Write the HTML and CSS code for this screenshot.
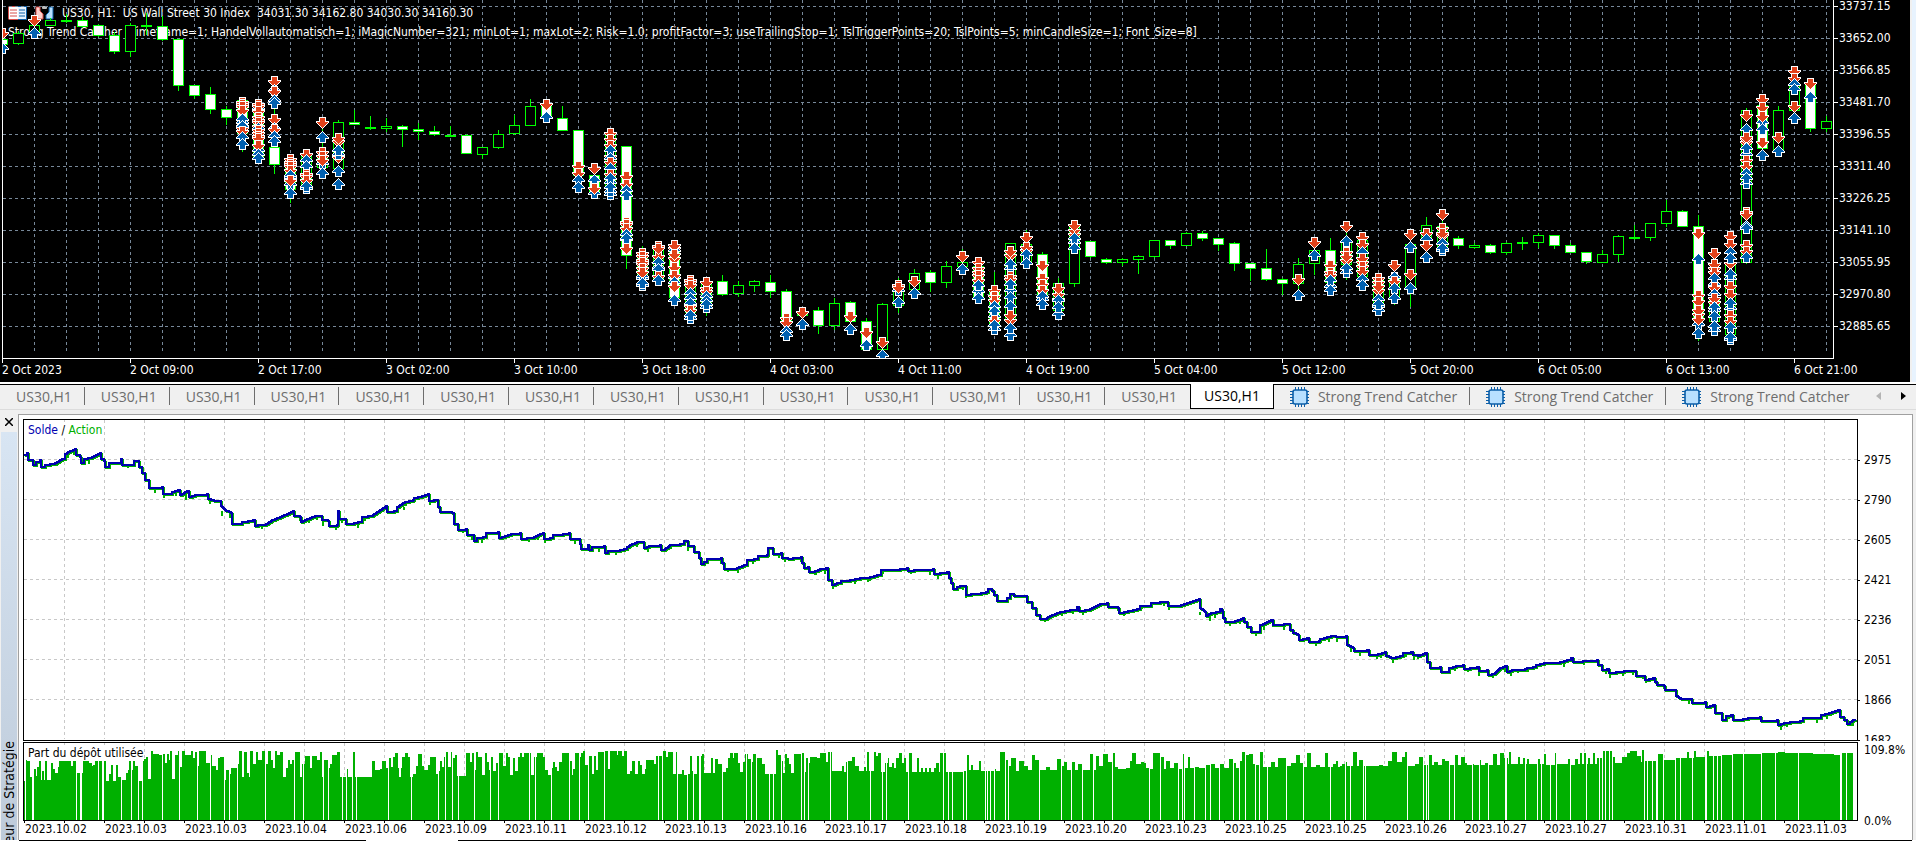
FILE: index.html
```
<!DOCTYPE html>
<html lang="fr">

<head>
    <meta charset="UTF-8">
    <meta name="viewport" content="width=device-width, initial-scale=1.0">
    <title>US30,H1</title>
    <link rel="stylesheet" href="styles.css">
</head>

<body>
    <!-- shared icon -->
    <svg class="defs" width="0" height="0">
        <symbol id="chip" viewBox="0 0 20 20">
            <path d="M6.5 0v20M9.5 0v20M12.5 0v20M15.5 0v20M0 4.5h20M0 7.5h20M0 10.5h20M0 13.5h20M0 16.5h20" stroke="#0b5ea8" stroke-width="1" transform="translate(-1 0)"/>
            <rect x="3" y="3" width="14" height="14" rx="2" fill="#b8e0ff" stroke="#0b5ea8" stroke-width="1.6"/>
        </symbol>
    </svg>

    <main class="chart-window">
        <div class="chart">
            <div class="plot-area">
                <div class="chart-header">
                    <div class="chart-title">
                        <svg width="19" height="14" viewBox="0 0 19 14">
                            <rect x="0.5" y="0.5" width="18" height="13" rx="1" fill="#fff" stroke="#d8504c"/>
                            <path d="M10 .5h8.5v13H10" fill="#e8f4ff" stroke="#0b5ea8"/>
                            <path d="M2 4h7M2 7h7M2 10h7" stroke="#d8504c"/>
                            <path d="M11 4h6M11 7h6M11 10h6" stroke="#0b5ea8"/>
                        </svg>
                        <svg width="19" height="14" viewBox="0 0 19 14">
                            <path d="M1 1h4v4l3 3v5H1z" fill="#ffd0cc" stroke="#d8504c"/>
                            <path d="M18 1h-4v5l-3 3v4h7z" fill="#b8e0ff" stroke="#0b5ea8"/>
                            <rect x="7" y="0" width="5" height="3" rx="1" fill="#bbb"/>
                        </svg>
                        <span>US30, H1:&nbsp; US Wall Street 30 Index&nbsp; 34031.30 34162.80 34030.30 34160.30</span>
                    </div>
                    <div class="chart-params">Strong Trend Catcher [Timeframe=1; HandelVollautomatisch=1; iMagicNumber=321; minLot=1; maxLot=2; Risk=1.0; profitFactor=3; useTrailingStop=1; TslTriggerPoints=20; TslPoints=5; minCandleSize=1; Font_Size=8]</div>
                </div>
                <svg id="candles" class="candles"></svg>
            </div>
            <div id="priceAxis" class="price-axis"></div>
            <div id="timeAxis" class="time-axis"></div>
        </div>
    </main>

    <nav class="tabs">
        <div id="tabList" class="tab-list"></div>
        <button class="tab-arrow disabled" aria-label="Précédent"><svg width="5" height="8"><path d="M5 0v8L0 4z"/></svg></button>
        <button class="tab-arrow" aria-label="Suivant"><svg width="5" height="8"><path d="M0 0v8l5-4z"/></svg></button>
    </nav>

    <section class="tester">
        <aside class="tester-side">
            <button class="close-btn" aria-label="Fermer"><svg width="8" height="8"><path d="M0 0l8 8M8 0L0 8" stroke="#000" stroke-width="1.5"/></svg></button>
            <div class="side-title"><span>Testeur de Stratégie</span></div>
        </aside>
        <div class="tester-main">
            <div class="balance-plot">
                <svg id="balance"></svg>
                <div class="plot-label"><span class="balance">Solde</span> / <span class="equity">Action</span></div>
            </div>
            <div id="balanceAxis" class="balance-axis"></div>
            <div class="deposit-plot">
                <svg id="deposit"></svg>
                <div class="plot-label">Part du dépôt utilisée</div>
            </div>
            <div class="deposit-axis"><span>109.8%</span><span>0.0%</span></div>
            <div id="dateAxis" class="date-axis"></div>
        </div>
    </section>
    <footer class="bottom-tabs"><span></span><span></span></footer>

    <script src="script.js"></script>
</body>

</html>
```
FILE: styles.css
```
* {
    box-sizing: border-box;
}

body {
    margin: 0;
    height: 100vh;
    display: flex;
    flex-direction: column;
    overflow: hidden;
    background: #f0f0f0;
    font-family: "DejaVu Sans Condensed", "DejaVu Sans", sans-serif;
    font-size: 12px;
    line-height: 16px;
    color: #000;
}

button {
    border: none;
    background: none;
    padding: 0;
    font: inherit;
    color: inherit;
}

svg {
    display: block;
}

.defs {
    position: absolute;
}

/* price chart */
.chart-window {
    padding-right: 6px;
    background: linear-gradient(to left, #e8f3fe 4px, #f0f0f0 4px);
}

.chart {
    display: grid;
    grid-template-columns: 1fr 76px;
    grid-template-rows: 359px 23px;
    background: #000;
    color: #fff;
}

.plot-area {
    position: relative;
    min-width: 0;
    margin-left: 2px;
    border: solid #fff;
    border-width: 0 1px 1px;
    overflow: hidden;
}

.chart-header {
    position: absolute;
    top: 5px;
    left: 5px;
    white-space: nowrap;
}

.chart-title {
    display: flex;
    align-items: center;
    gap: 8px;
}

.chart-params {
    margin-top: 3px;
}

.candles {
    position: relative;
    width: 100%;
    height: 100%;
    shape-rendering: crispEdges;
}

.price-axis {
    overflow: hidden;
}

.price-axis span {
    display: flex;
    align-items: center;
    gap: 1px;
    height: 32px;
}

.price-axis span:first-child {
    margin-top: -10px;
}

.price-axis span::before {
    content: "";
    width: 4px;
    height: 1px;
    background: #fff;
}

.time-axis {
    grid-column: 1 / 3;
    display: flex;
    margin-left: 2px;
    overflow: hidden;
}

.time-axis span {
    position: relative;
    flex: none;
    width: 128px;
    padding-top: 3px;
    white-space: nowrap;
}

.time-axis span:last-child {
    width: auto;
}

.time-axis span::before {
    content: "";
    position: absolute;
    top: 0;
    left: 0;
    width: 1px;
    height: 4px;
    background: #fff;
}

/* chart tabs */
.tabs {
    display: flex;
    align-items: center;
    flex: none;
    height: 28px;
    border-top: 1px solid #fff;
    border-bottom: 1px solid #dcdcdc;
    font-family: "Open Sans", "Noto Sans", sans-serif;
    font-size: 14px;
    color: #6d6d6d;
    box-shadow: inset 0 1px #fff, inset 0 2px #000;
}

.tab-list {
    display: flex;
    flex: 1;
    min-width: 0;
    height: 100%;
    padding-top: 1px;
    overflow: hidden;
}

.tab {
    position: relative;
    flex: none;
    display: flex;
    align-items: center;
    gap: 8px;
    height: 25px;
    padding: 0 13px 0 16px;
    white-space: nowrap;
}

.tab::after {
    content: "";
    position: absolute;
    right: 0;
    top: 3px;
    width: 1px;
    height: 18px;
    background: #6d6d6d;
}

.tab.no-sep::after,
.tab.active::after {
    display: none;
}

.tab.active {
    background: #fff;
    border: 1px solid #000;
    border-top: none;
    color: #000;
    padding: 0 13px;
}

.tab-arrow {
    width: 25px;
    display: flex;
    justify-content: center;
}

.tab-arrow.disabled {
    fill: #b4b4b4;
}

/* strategy tester */
.tester {
    display: flex;
    flex: 1;
    min-height: 0;
    margin: 4px 3px 0 0;
}

.tester-side {
    width: 18px;
    flex: none;
    display: flex;
    flex-direction: column;
    padding: 3px 1px 0;
}

.close-btn {
    height: 9px;
    margin-left: 4px;
}

.side-title {
    flex: 1;
    min-height: 0;
    display: flex;
    margin-top: 6px;
    overflow: hidden;
    background: linear-gradient(#d8e5f3, #becbda);
    font-size: 14px;
}

.side-title span {
    writing-mode: vertical-rl;
    transform: rotate(180deg);
    margin-top: auto;
    margin-bottom: -28px;
    white-space: nowrap;
}

.tester-main {
    flex: 1;
    min-width: 0;
    display: grid;
    grid-template-columns: 1fr 54px;
    grid-template-rows: 322px 1px 79px 1fr;
    padding: 4px 0 0 4px;
    border: solid #a0a0a0;
    border-width: 1px 1px 0 1px;
    background: #fff;
}

.balance-plot,
.deposit-plot {
    position: relative;
    min-width: 0;
    border: 1px solid #000;
}

.balance-plot {
    overflow: hidden;
}

.balance-plot svg,
.deposit-plot svg {
    width: 100%;
    height: 100%;
    shape-rendering: crispEdges;
}

.plot-label {
    position: absolute;
    top: 2px;
    left: 3px;
    padding: 0 1px;
    background: #fff;
}

.balance {
    color: #0000b0;
}

.equity {
    color: #00b000;
}

.balance-axis {
    overflow: hidden;
    padding-top: 21px;
}

.balance-axis span,
.deposit-axis span {
    display: flex;
    align-items: center;
    gap: 4px;
    height: 40px;
}

.balance-axis span::before {
    content: "";
    width: 2px;
    height: 1px;
    background: #000;
}

.deposit-plot,
.deposit-axis {
    grid-row: 3;
}

.deposit-axis {
    display: flex;
    flex-direction: column;
    justify-content: space-between;
    padding-left: 6px;
}

.deposit-axis span {
    height: 16px;
}

.deposit-axis span:last-child {
    margin-bottom: -8px;
}

.date-axis {
    grid-column: 1 / 3;
    grid-row: 4;
    display: flex;
    overflow: hidden;
    padding-left: 1px;
}

.date-axis span {
    position: relative;
    flex: none;
    width: 80px;
    white-space: nowrap;
    padding-left: 1px;
}

.date-axis span::before,
.date-axis span::after {
    content: "";
    position: absolute;
    top: 0;
    left: 0;
    width: 1px;
    height: 2px;
    background: #000;
}

.date-axis span::after {
    left: 40px;
}

.bottom-tabs {
    display: flex;
    gap: 92px;
    height: 1px;
    flex: none;
    padding: 0 4px 0 19px;
    background: #fff;
}

.bottom-tabs span {
    width: 347px;
    background: #000;
}

.bottom-tabs span:last-child {
    flex: 1;
}
```
FILE: script.js
```
// one bar per line: type (u/d) high open/close low | trade arrows in draw order
const bars = `
d 28 39 44 44|r33 b48
u 31 33 43 45|
u 16 25 33 33|r20 b33
u 18 20 25 26|
u 14 20 20 23|
d 17 20 26 28|
d 24 25 35 37|
d 32 35 51 54|
u 23 25 51 57|
u 13 25 25 35|
d 16 26 39 41|
d 39 39 85 91|
d 85 85 95 99|
d 87 94 109 114|
d 106 109 117 125|
d 98 100 133 152|r102 b106 r104 r106 r110 b125 b122 b119 r128 b126 r131 b137 b144
d 100 104 158 160|r104 b108 r106 r111 r117 r120 r122 r126 b128 r130 r133 r136 r138 b150 r145 b154 b158
d 80 147 164 174|r81 b90 r91 b100 b103 r119 b128 r129 b136 b141
d 158 165 189 203|r159 r162 r164 r166 r170 b180 b177 b175 b184 r180 b193
u 150 156 188 190|r154 b160 b166 r174 r176 r180 b188 b186
u 120 155 167 178|r122 b137 r152 r156 b163 r160 b173
u 120 122 168 169|r141 r138 r157 b154 b150 b171 b184
d 110 122 124 124|
u 116 127 127 130|
u 118 126 128 132|
d 125 126 129 147|
d 123 129 131 140|
d 126 131 134 136|
u 126 135 135 136|
d 134 135 153 153|
u 147 147 154 159|
u 130 134 147 149|
u 115 125 133 135|
u 99 106 125 125|
d 104 106 116 120|r104 b117
d 106 118 130 130|
d 130 130 175 178|r166 r173 b180 b187
d 168 175 191 196|r168 b180 b193 r188
u 130 132 188 196|r133 r139 r145 r156 b150 b158 r162 b168 r174 b182 b178 b194 b191 b187
d 146 146 255 269|r176 r184 b190 b195 r222 r224 r228 b239 b234 b238 r248
d 246 252 278 290|r253 r256 r260 r264 r262 r268 b278 b276 r272 b285 b283
u 244 250 278 280|r246 r256 r248 b267 b262 b269 r276 b280
d 242 250 297 300|r248 b250 r245 r258 r254 r267 b277 r275 b282 r286 b300
u 276 284 312 320|r280 r282 r285 b293 b298 r306 b303 r310 b318 b315
u 278 284 308 316|r288 r282 r291 b296 b300 b307 b304
d 275 281 294 296|
u 281 285 293 297|
u 280 281 285 292|
d 275 282 291 298|
d 289 291 320 332|r318 r322 b331 b335
u 308 311 315 322|r312 b324
d 307 310 325 334|
u 298 303 325 330|
d 301 302 321 330|r316 b329
d 318 321 349 349|r332 b345
u 303 304 349 352|r342 b355
u 278 285 305 313|r285 b290 r287 b302
u 269 273 289 290|r281 b293
d 270 272 282 292|
u 261 266 282 288|
u 249 262 266 272|r256 b269
d 260 266 296 302|r262 r268 r272 r275 r280 b291 b285 b298
d 272 290 326 330|r290 r296 r300 b306 b316 b311 r320 b329 b325
u 243 243 320 330|r255 r251 b268 b264 r276 r279 b290 b284 b297 b306 r320 r315 b335 b328
u 230 244 262 264|r237 r250 r247 b254 b263
d 252 254 299 300|r265 r278 r284 r290 b299 b296 b304
u 278 283 310 316|r299 r294 r288 b300 b314 b307
u 220 226 283 287|r234 r230 r225 b242 b238 b248
d 241 241 256 258|
d 258 259 262 264|
u 258 259 262 266|
u 255 256 259 274|
u 240 240 256 258|
d 240 240 245 249|
u 232 233 245 246|
d 231 233 238 241|
d 238 238 244 251|
d 242 243 263 271|
d 263 263 268 281|
d 249 268 279 281|
d 278 279 283 295|
u 258 264 283 290|r279 b295
u 240 250 263 275|r242 b255
d 238 250 282 290|r265 r272 r275 b286 b280 b290
u 222 240 264 280|r226 b241 r252 r260 r256 b272 b268
u 236 240 276 284|r237 r244 b252 r262 r258 r266 r271 b279 b285
u 276 280 306 310|r278 r290 r282 r286 b306 b299 b310 b304
u 265 278 299 305|r265 r277 b277 r281 b288 b298
u 230 244 288 307|r234 b247 r274 b288
u 217 225 240 250|r233 b239 r245 b257
u 212 226 246 250|r214 r228 r235 r233 b250 b243 b248
d 236 238 245 249|
u 243 245 247 249|
d 244 245 252 254|
u 242 243 252 255|
u 237 242 242 250|
u 233 235 242 248|
d 235 235 245 249|
d 243 245 252 253|
d 252 252 261 264|
u 250 254 262 263|
u 235 236 254 262|
u 225 237 237 240|
u 223 223 237 241|
u 200 211 223 227|
d 210 211 226 227|
d 215 226 320 341|r233 b259 r295 r301 r314 r310 b324 r319 b333
u 248 300 321 325|r253 r268 r264 r272 b284 b278 r287 b294 r302 r298 b310 b307 b316 b330 b326
u 234 262 334 336|r236 r244 b252 r263 b258 b278 b274 r286 r294 b308 b303 r315 r321 b327 b339 b337
u 108 110 262 264|r115 b129 r142 r139 r137 b154 b148 r160 r166 b173 b183 b178 r212 r214 b226 b228 r245 r251 b257
d 96 105 148 152|r99 r107 b122 r116 b129 r142 b155
u 106 110 149 150|r137 b151
u 70 85 110 114|r71 r78 b84 b89 r106 b118
d 82 82 128 132|r83 b97
u 116 121 128 132|`.trim().split('\n');

const arrowDown = 'M-3 -5h6v4h3v1l-6 6l-6 -6v-1h3z';
const arrowUp = 'M-3 5h6v-4h3v-1l-6 -6l-6 6v1h3z';

// dashed grid, x0/y0 are the positions of the first lines
function grid(x0, stepX, y0, stepY, w, h, color) {
    let s = '';
    for (let x = x0; x < w; x += stepX) {
        s += `<path d="M${x}.5 0V${h}"/>`;
    }
    for (let y = y0; y < h; y += stepY) {
        s += `<path d="M0 ${y}.5H${w}"/>`;
    }
    return `<g stroke="${color}" stroke-dasharray="3 3" fill="none">${s}</g>`;
}

function drawCandles() {
    let s = grid(31, 32, 6, 32, 4000, 354, '#778899');
    let arrows = '';
    bars.forEach((line, i) => {
        const [bar, trades] = line.split('|');
        const [type, high, top, bottom, low] = bar.split(' ');
        const x = i * 16 - 1;
        const h = bottom - top;
        s += `<path d="M${x + 0.5} ${high}V${top}M${x + 0.5} ${bottom}V${low}" stroke="#0f0"/>`;
        if (h < 2) {
            s += `<rect x="${x - 5}" y="${top}" width="11" height="2" fill="#0f0"/>`;
        } else {
            s += `<rect x="${x - 4.5}" y="${+top + 0.5}" width="10" height="${h}" stroke="#0f0" fill="${type === 'd' ? '#fff' : '#000'}"/>`;
        }
        trades.split(' ').filter(Boolean).forEach(t => {
            const sell = t[0] === 'r';
            arrows += `<path transform="translate(${x + 0.5} ${t.slice(1)}.5)" d="${sell ? arrowDown : arrowUp}" fill="${sell ? '#e2421b' : '#0060b0'}"/>`;
        });
    });
    s += `<g stroke="#fff">${arrows}</g>`;
    document.getElementById('candles').innerHTML = s;
}

const balance = `24,455 27,453 28,460 32,460 33,465 36,462 40,460 41,467 45,465 55,463 62,459 65,454 70,451 75,449 76,455 80,457 81,463 84,459 92,457 100,453 101,459 104,461 105,467 109,463 118,463 121,459 122,465 130,465 134,461 138,461 139,467 142,473 145,480 149,488 162,487 163,494 168,494 172,492 178,490 180,495 187,491 189,497 195,495 207,494 208,499 214,501 220,501 221,506 226,511 231,513 232,524 238,524 242,522 253,520 255,526 258,525 266,524 272,520 280,517 293,511 294,516 300,517 301,522 307,519 315,516 322,515 322,520 328,521 329,526 337,525 338,511 339,519 345,519 346,524 350,524 358,522 362,517 373,515 380,510 386,506 387,512 394,511 397,507 405,502 413,500 414,498 422,496 428,494 429,501 434,500 438,507 440,512 452,513 454,524 458,530
466,529 467,535 473,535 474,541 477,538 483,537 486,533 498,532 499,538 505,536 511,534 520,533 521,539 527,538 534,537 540,534 543,533 544,539 550,538 553,535 563,534 569,533 570,539 578,539 580,544 581,549 585,549 588,545 589,550 592,547 598,547 604,546 605,553 608,551 620,550 624,549 627,547 632,544 637,542 643,542 644,548 649,546 660,545 661,550 665,549 670,545 680,544 684,541 687,541 688,546 693,546 694,552 698,552 699,558 701,564 704,562 707,559 721,558 722,563 724,569 734,569 739,567 744,565 747,560 754,559 758,556 767,555 768,548 772,548 773,554 781,553 782,558 788,559 793,558 801,557 802,563 804,568 808,567 809,572 815,571 820,569 826,568 828,580 832,585 837,583 841,581 850,580 860,578 870,577 877,575 881,570 893,570 900,569 907,568 908,571 914,570 933,569 934,574 940,573 947,572 949,578 951,583 953,589 957,587 960,586 965,586 966,595 971,594 975,594
986,592 988,589 992,591 994,595 997,601 1003,601 1007,598 1010,594 1014,596 1026,596 1027,602 1032,602 1032,608 1036,615 1040,619 1045,619 1050,616 1057,613 1060,612 1070,610 1076,610 1077,607 1079,611 1090,609 1100,604 1107,603 1108,607 1118,608 1119,613 1128,611 1137,609 1140,606 1150,606 1151,603 1160,602 1167,602 1168,606 1178,606 1187,603 1193,601 1199,599 1200,608 1205,612 1206,616 1211,613 1216,612 1220,609 1222,611 1223,618 1225,622 1232,622 1238,620 1243,618 1244,622 1247,627 1251,632 1258,632 1260,625 1265,623 1273,619 1273,625 1284,624 1289,624 1290,630 1293,633 1298,635 1299,640 1307,638 1309,642 1319,641 1320,639 1331,636 1336,637 1346,636 1347,645 1353,648 1354,651 1367,650 1369,655 1378,654 1385,652 1386,656 1391,658 1400,656 1403,653 1411,652 1413,655 1418,656 1425,653 1427,662 1430,668 1440,667 1441,672 1446,672 1449,668 1456,666 1463,665 1464,669 1470,668 1477,667 1479,671 1487,670 1488,675 1495,673 1500,668
1505,666 1507,672 1512,670 1522,670 1527,668 1533,667 1536,665 1544,663 1560,662 1567,660 1571,658 1573,662 1583,661 1597,660 1598,665 1602,670 1607,669 1609,673 1616,672 1624,671 1635,671 1636,676 1644,676 1645,680 1653,678 1655,682 1657,685 1664,686 1665,690 1674,690 1676,696 1681,699 1690,699 1692,703 1705,702 1706,707 1713,705 1715,713 1720,713 1722,720 1726,716 1731,715 1733,720 1743,719 1748,718 1760,717 1761,721 1777,720 1778,725 1784,723 1790,722 1800,721 1803,718 1817,718 1821,715 1829,713 1838,710 1840,717 1844,720 1847,724 1850,722 1855,719`
    .split(/\s+/).map(p => p.split(',').map(Number));

// small repeatable noise source
let seed = 7;
function rnd() {
    seed = (seed * 16807) % 2147483647;
    return seed / 2147483647;
}

function drawBalance() {
    let d = '';
    let dips = '';
    balance.forEach(([px, py], i) => {
        const x = px - 24;
        const y = py - 420;
        if (!i) {
            d += `M${x} ${y}`;
            return;
        }
        const [qx, qy] = balance[i - 1];
        const dx = px - qx;
        const dy = py - qy;
        if (Math.abs(dy) < 7 && dx > 4) {
            // slow move: split into short steps
            const n = Math.max(1, Math.min(Math.abs(dy), dx));
            for (let k = 1; k <= n; k++) {
                d += `H${qx - 24 + Math.round(dx * k / n)}V${qy - 420 + Math.round(dy * k / n)}`;
            }
            if (rnd() > 0.4) {
                dips += `M${qx - 24 + Math.round(dx * rnd())} ${Math.max(qy, py) - 420}v${3 + Math.round(rnd() * 2)}`;
            }
        } else {
            d += `H${x}V${y}`;
        }
    });
    document.getElementById('balance').innerHTML = grid(40, 40, 39, 40, 4000, 319, '#c8c8c8') +
        `<g fill="none" stroke-width="2"><path d="${d}" stroke="#00b000" transform="translate(1 1)"/>` +
        `<path d="${dips}" stroke="#00b000"/><path d="${d}" stroke="#0000b0"/></g>`;
}

// x:top of each deposit load level
const load = `24:781 26:760 30:777 34:769 36:776 37:767 39:761 41:780 42:771 44:780 45:759 47:780 51:763 53:769 55:773 58:767 59:759 71:766 73:759 77:773 83:759 89:763 92:766 93:765 95:759 106:781 109:774 111:765 113:781 116:765 118:777 121:780 126:773 128:770 129:761 131:770 133:759 135:766 138:781 143:759 146:757 148:779 151:751 153:754 159:755 162:754 165:763 167:754 169:760 170:751 172:779 175:755 178:751 180:767 182:751 185:755 191:751 193:758 195:752 197:766 199:751 206:763 210:755 212:766 216:770 218:758 220:757 224:780 226:770 229:774 231:768 237:764 239:751 242:777 244:752 247:773 249:777 250:751 253:764 256:752 258:760 262:751 265:764 268:751 271:760 273:768 275:751 277:755 280:752 283:777 286:768 288:760 290:764 292:760 295:752 300:777 302:764 305:756 310:768 312:756 317:760 320:752 322:777 324:760 328:768 330:764 332:755 337:752 340:777 346:769 348:777 353:752 355:777 372:761 375:770 380:769 382:761 386:768 388:758 391:767 393:757 395:753 398:768 399:777 401:768 402:757 405:753 408:757 410:777 413:774 416:766 418:754 422:766 424:770 428:765 430:757 436:774 438:771 440:761 442:767 444:757 446:752 448:767 451:752 453:758 455:755 457:776 466:753 470:762 472:753 475:770 476:752 478:757 482:775 485:753 487:762 489:770 491:757 493:771 496:763 499:753 503:766 506:753 508:757 510:775 513:758 515:771 518:757 520:753 522:757 524:753 531:775 534:757 537:753 543:757 545:770 548:775 551:768 553:762 555:767 557:771 559:762 562:753 569:761 572:775 573:769 575:753 579:757 581:753 583:751 585:765 588:769 589:756 592:774 594:756 596:770 598:752 605:751 608:769 610:751 617:755 618:751 622:756 624:751 627:774 630:771 632:761 635:774 638:761 640:765 642:774 645:769 646:760 654:764 656:756 662:751 666:757 668:752 673:774 676:752 678:774 682:770 684:775 688:774 690:756 692:771 694:774 697:756 702:754 704:773 711:758 713:773 715:759 718:764 722:772 726:768 728:758 730:753 733:758 734:753 738:763 740:772 743:762 745:754 748:759 751:762 753:754 757:758 762:764 765:774 776:750 778:755 781:761 783:773 785:754 787:758 789:764 791:773 794:754 802:753 804:772 806:758 808:763 810:757 817:758 820:753 826:762 828:752 832:771 842:766 844:772 846:762 848:761 852:757 855:766 859:771 864:767 866:771 867:752 869:771 874:752 876:756 878:753 881:772 885:763 888:758 889:767 892:763 894:768 896:758 899:753 902:763 904:758 906:772 909:753 912:772 917:758 919:772 921:768 923:772 925:768 927:772 929:768 931:772 934:768 936:763 939:772 940:753 943:766 944:753 946:772 964:771 967:755 969:770 971:765 973:770 979:761 981:0
1500:753 1504:758 1508:764 1509:752 1511:764 1518:757 1520:764 1523:758 1525:764 1527:759 1529:764 1538:759 1540:764 1544:754 1546:765 1555:753 1557:764 1568:759 1570:765 1575:759 1578:764 1580:753 1582:764 1584:753 1586:764 1588:758 1590:764 1593:753 1595:764 1597:758 1602:751 1613:757 1615:763 1622:757 1627:753 1630:751 1637:756 1641:762 1642:750 1644:761 1658:754 1663:760 1676:758 1687:752 1689:758 1694:751 1696:757 1705:758 1707:751 1709:756 1722:755 1732:754 1762:753 1778:752 1785:753 1813:754 1834:755 1840:753 1853:821`
    .split(/\s+/).map(p => p.split(':').map(Number));

const gaps = [25, 32, 33, 76, 80, 81, 98, 102, 103, 121, 131, 138, 142, 162, 179, 197, 210, 224, 229, 237, 265, 294, 303, 323, 328, 342, 346, 352, 356, 388, 411, 438, 445, 452, 458,
    474, 490, 498, 529, 535, 551, 569, 579, 588, 604, 658, 662, 677, 687, 693, 699, 700, 722, 746, 751, 756, 769, 773, 781, 801, 804, 808, 830, 847, 870, 882, 886, 908, 943, 948, 952, 963, 966,
    1505, 1506, 1525, 1537, 1541, 1550, 1556, 1570, 1586, 1599, 1602, 1605, 1609, 1612, 1644, 1647, 1652, 1656, 1657, 1663, 1675, 1680, 1692, 1705, 1706, 1713, 1717, 1721, 1732, 1743, 1761, 1775, 1798, 1840, 1841, 1846];

function drawDeposit() {
    let s = '';
    const bar = (x, w, top) => {
        s += `<rect x="${x - 24}" y="${top - 743}" width="${w}" height="${820 - top}"/>`;
    };
    load.forEach(([x, top], i) => {
        if (top > 700 && load[i + 1]) {
            bar(x, load[i + 1][0] - x, top);
        }
    });
    for (let x = 981; x < 1500;) {
        const w = 2 + Math.round(rnd() * 3);
        const base = 771 - Math.round((x - 980) / 80);
        const top = rnd() < 0.4 ? base : 752 + Math.round(rnd() * (base - 752));
        bar(x, Math.min(w, 1500 - x), top);
        if (rnd() < 0.3) {
            gaps.push(x);
        }
        x += w;
    }
    const white = gaps.map(x => `M${x - 23.5} 0V78`).join('');
    document.getElementById('deposit').innerHTML = grid(40, 40, 1000, 40, 4000, 77, '#c8c8c8') +
        `<g fill="#00b000">${s}</g><path d="${white}" stroke="#fff"/>`;
}

function fill(id, items) {
    document.getElementById(id).innerHTML = items.map(t => `<span>${t}</span>`).join('');
}

drawCandles();
drawBalance();
drawDeposit();

fill('priceAxis', ['33737.15', '33652.00', '33566.85', '33481.70', '33396.55', '33311.40', '33226.25', '33141.10', '33055.95', '32970.80', '32885.65']);
fill('timeAxis', ['2 Oct 2023', '2 Oct 09:00', '2 Oct 17:00', '3 Oct 02:00', '3 Oct 10:00', '3 Oct 18:00', '4 Oct 03:00', '4 Oct 11:00', '4 Oct 19:00', '5 Oct 04:00', '5 Oct 12:00', '5 Oct 20:00', '6 Oct 05:00', '6 Oct 13:00', '6 Oct 21:00']);
fill('balanceAxis', ['2975', '2790', '2605', '2421', '2236', '2051', '1866', '1682']);
fill('dateAxis', ['10.02', '10.03', '10.03', '10.04', '10.06', '10.09', '10.11', '10.12', '10.13', '10.16', '10.17', '10.18', '10.19', '10.20', '10.23', '10.25', '10.25', '10.26', '10.27', '10.27', '10.31', '11.01', '11.03'].map(t => '2023.' + t));

let tabs = '';
for (let i = 0; i < 14; i++) {
    tabs += `<button class="tab${i === 13 ? ' no-sep' : ''}">${i === 11 ? 'US30,M1' : 'US30,H1'}</button>`;
}
tabs += '<button class="tab active">US30,H1</button>';
for (let i = 0; i < 3; i++) {
    tabs += `<button class="tab${i === 2 ? ' no-sep' : ''}"><svg width="20" height="20"><use href="#chip"/></svg>Strong Trend Catcher</button>`;
}
document.getElementById('tabList').innerHTML = tabs;
```
